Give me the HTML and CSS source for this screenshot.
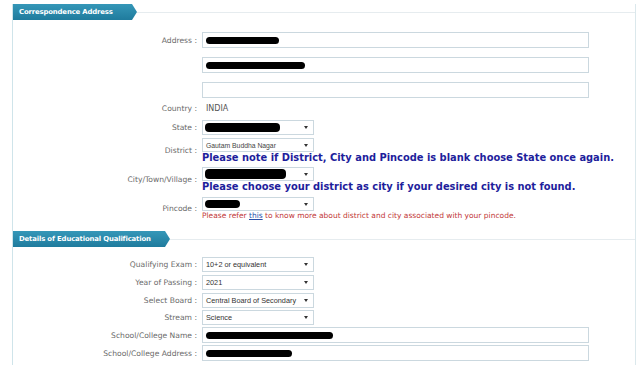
FILE: index.html
```html
<!DOCTYPE html>
<html>
<head>
<meta charset="utf-8">
<link rel="stylesheet" href="styles.css">
</head>
<body>
<div class="panel">
  <div class="sec-head sec-head-1">
    <div class="tab tab-1">Correspondence Address</div>
    <div class="rule"></div>
  </div>
  <div class="rows rows-1">
    <div class="row row-a1">
      <span class="lbl">Address :</span>
      <div class="fld"><div class="inp"><span class="redact rw-73"></span></div></div>
    </div>
    <div class="row row-a2">
      <span class="lbl"></span>
      <div class="fld"><div class="inp"><span class="redact rw-99"></span></div></div>
    </div>
    <div class="row row-a3">
      <span class="lbl"></span>
      <div class="fld"><div class="inp"></div></div>
    </div>
    <div class="row row-country">
      <span class="lbl">Country :</span>
      <div class="fld"><span class="val">INDIA</span></div>
    </div>
    <div class="row row-state">
      <span class="lbl">State :</span>
      <div class="fld"><div class="sel sel-15"><span class="redact rw-75 rh-9"></span></div></div>
    </div>
    <div class="row row-district">
      <span class="lbl">District :</span>
      <div class="fld">
        <div class="sel sel-14"><span class="seltext small">Gautam Buddha Nagar</span></div>
        <div class="note">Please note if District, City and Pincode is blank choose State once again.</div>
      </div>
    </div>
    <div class="row row-city">
      <span class="lbl">City/Town/Village :</span>
      <div class="fld">
        <div class="sel sel-14"><span class="redact rw-81 rh-10"></span></div>
        <div class="note">Please choose your district as city if your desired city is not found.</div>
      </div>
    </div>
    <div class="row row-pin">
      <span class="lbl">Pincode :</span>
      <div class="fld">
        <div class="sel sel-14"><span class="redact rw-35 rh-8"></span></div>
        <div class="warn">Please refer <a class="link" href="#">this</a> to know more about district and city associated with your pincode.</div>
      </div>
    </div>
  </div>

  <div class="sec-head sec-head-2">
    <div class="tab tab-2">Details of Educational Qualification</div>
    <div class="rule"></div>
  </div>
  <div class="rows rows-2">
    <div class="row row-q1">
      <span class="lbl">Qualifying Exam :</span>
      <div class="fld"><div class="sel sel-15"><span class="seltext">10+2 or equivalent</span></div></div>
    </div>
    <div class="row row-q2">
      <span class="lbl">Year of Passing :</span>
      <div class="fld"><div class="sel sel-15"><span class="seltext">2021</span></div></div>
    </div>
    <div class="row row-q3">
      <span class="lbl">Select Board :</span>
      <div class="fld"><div class="sel sel-15"><span class="seltext">Central Board of Secondary</span></div></div>
    </div>
    <div class="row row-q4">
      <span class="lbl">Stream :</span>
      <div class="fld"><div class="sel sel-15"><span class="seltext">Science</span></div></div>
    </div>
    <div class="row row-q5">
      <span class="lbl">School/College Name :</span>
      <div class="fld"><div class="inp"><span class="redact rw-127"></span></div></div>
    </div>
    <div class="row row-q6">
      <span class="lbl">School/College Address :</span>
      <div class="fld"><div class="inp"><span class="redact rw-86"></span></div></div>
    </div>
  </div>
</div>
</body>
</html>
```
FILE: styles.css
```css
* { box-sizing: border-box; }
html, body { margin: 0; padding: 0; background: #fff; }
body {
  font-family: "DejaVu Sans", Verdana, sans-serif;
  width: 638px;
  height: 365px;
  overflow: hidden;
}
.panel {
  margin-left: 12px;
  width: 624px;
  height: 365px;
  border-left: 1px solid #cfe4ea;
  border-right: 1px solid #dbe8ec;
}
.sec-head {
  display: flex;
  align-items: center;
  height: 16px;
}
.sec-head-1 { margin-top: 4px; }
.sec-head-2 { margin-top: 11px; }
.tab {
  height: 16px;
  background: linear-gradient(#3597b8, #1f7b9d);
  color: #fff;
  font-weight: bold;
  font-size: 6.9px;
  line-height: 16px;
  padding-left: 6px;
  clip-path: polygon(0 0, calc(100% - 5px) 0, 100% 50%, calc(100% - 5px) 100%, 0 100%);
  white-space: nowrap;
  letter-spacing: -0.15px;
}
.tab-1 { width: 124px; }
.tab-2 { width: 157px; }
.rule {
  flex: 1;
  height: 1px;
  background: #e6ecef;
}
.rows-1 { padding-top: 12px; }
.rows-2 { padding-top: 10px; }
.row {
  display: grid;
  grid-template-columns: 184px 1fr;
  column-gap: 5px;
  align-items: center;
}
.lbl {
  text-align: right;
  font-size: 7.6px;
  color: #6a6a6a;
  white-space: nowrap;
}
.fld { display: flex; flex-direction: column; align-items: flex-start; }
.inp {
  width: 387px;
  height: 16px;
  border: 1px solid #cbd8df;
  background: #fff;
  display: flex;
  align-items: center;
  padding-left: 3px;
}
.sel {
  position: relative;
  width: 112px;
  border: 1px solid #cbd8df;
  background: #fff;
  display: flex;
  align-items: center;
  padding-left: 2px;
}
.sel::after {
  content: "";
  position: absolute;
  right: 5px;
  top: 50%;
  margin-top: -1.5px;
  border-left: 2px solid transparent;
  border-right: 2px solid transparent;
  border-top: 3.5px solid #333;
}
.sel-15 { height: 15px; }
.sel-14 { height: 14px; }
.seltext {
  font-family: "Liberation Sans", Arial, sans-serif;
  font-size: 7.3px;
  color: #333;
  padding-left: 1px;
  white-space: nowrap;
}
.seltext.small { font-size: 6.8px; color: #444; }
.redact {
  display: inline-block;
  height: 7px;
  background: #000;
  border-radius: 4px;
}
.rh-8 { height: 8px; }
.rh-9 { height: 9px; }
.rh-10 { height: 10px; }
.rw-35 { width: 35px; }
.rw-73 { width: 73px; }
.rw-75 { width: 75px; }
.rw-81 { width: 81px; }
.rw-86 { width: 86px; }
.rw-99 { width: 99px; }
.rw-127 { width: 127px; }
.val {
  font-size: 8px;
  color: #555;
  padding-left: 4px;
}
.note {
  font-size: 9.9px;
  font-weight: bold;
  color: #1e1e9c;
  line-height: 11px;
  white-space: nowrap;
}
.warn {
  font-size: 7.5px;
  color: #c23838;
  line-height: 9px;
  white-space: nowrap;
}
.link { color: #2a4fa8; text-decoration: underline; }

.row-a1 { margin-top: 0; }
.row-a2 { margin-top: 9px; }
.row-a3 { margin-top: 9px; }
.row-country { margin-top: 4px; height: 12px; }
.row-state { margin-top: 6px; }
.row-district { margin-top: 3px; }
.row-city { margin-top: 4px; }
.row-pin { margin-top: 5px; }
.row-q1 { margin-top: 0; }
.row-q2 { margin-top: 3px; }
.row-q3 { margin-top: 3px; }
.row-q4 { margin-top: 2px; }
.row-q5 { margin-top: 2px; }
.row-q6 { margin-top: 2px; }
```
